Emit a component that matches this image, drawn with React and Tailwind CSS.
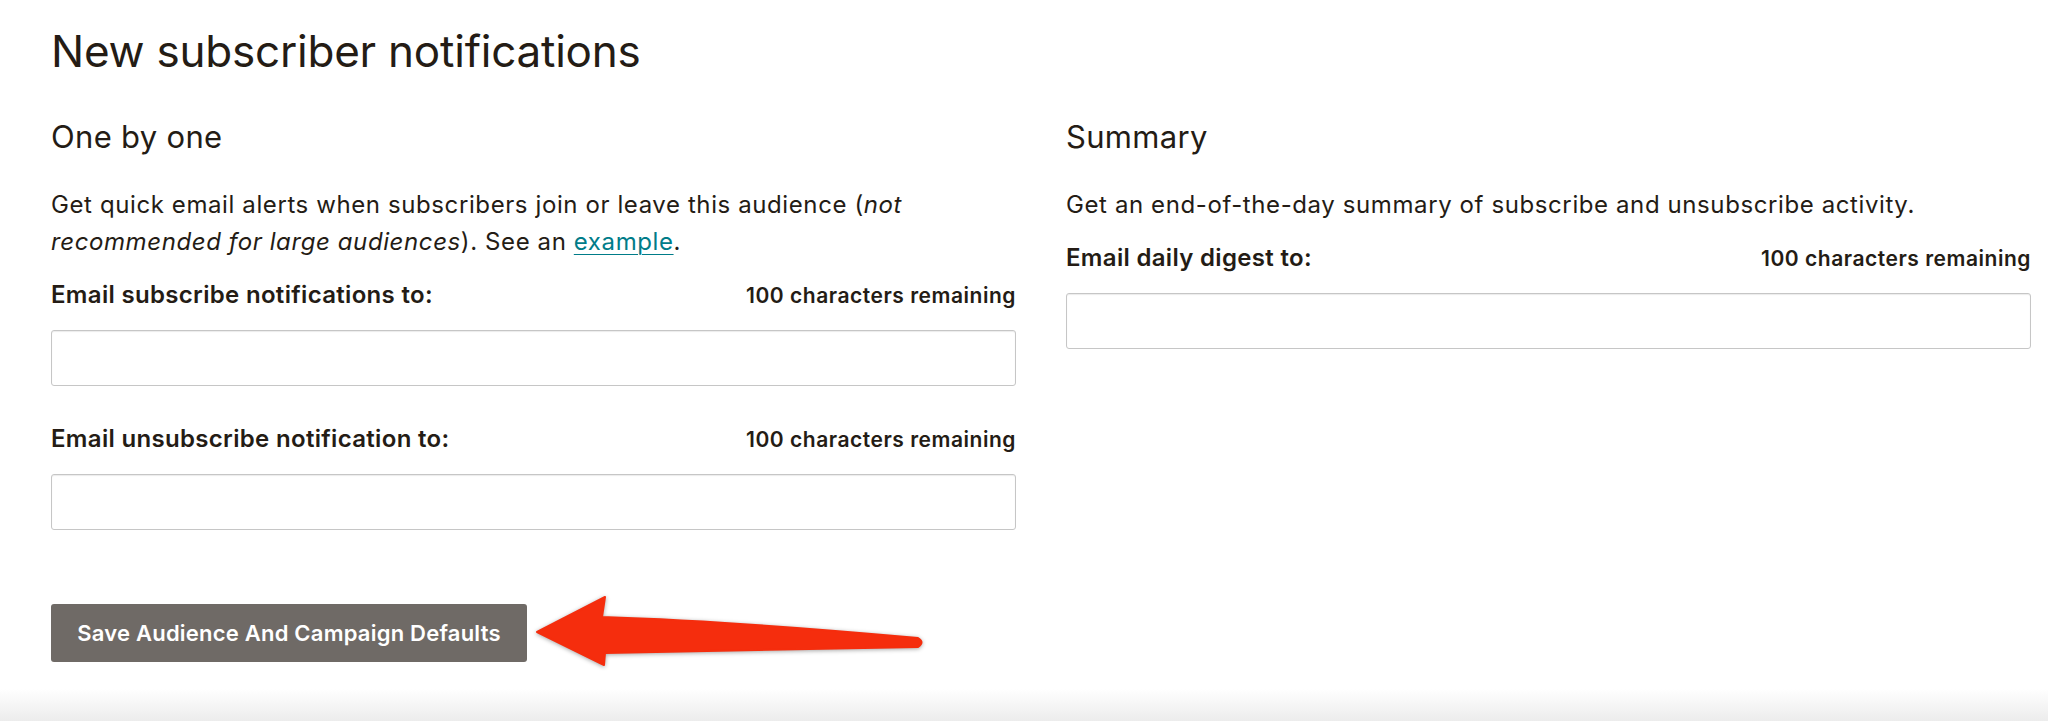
import React from 'react';

const FieldLabel = ({ children, className = 'mt-[20px]' }) => (
  <div className={`flex items-baseline justify-between tracking-[0.02em] ${className}`}>
    <label className="text-[24px] leading-[30px] font-semibold">{children}</label>
    <span className="text-[21px] leading-[30px] font-semibold tracking-[0.025em]">100 characters remaining</span>
  </div>
);

const TextField = () => (
  <input
    type="text"
    className="block w-full h-[56px] mt-[19px] rounded-[3px] border border-[#c6c6c6] bg-white shadow-[inset_0_1px_1px_rgba(0,0,0,0.08)] px-4 text-[24px] outline-none"
  />
);

// hand-drawn callout arrow pointing back at the save button
const CalloutArrow = () => (
  <svg
    className="absolute left-[530px] top-[590px] drop-shadow-[0_1px_2px_rgba(0,0,0,0.35)]"
    width="400"
    height="84"
    viewBox="0 0 400 84"
  >
    <path
      d="M7 42 L75 7 L72 27 Q200 31 388 48 Q395 52 388 57 Q200 60 75 63 L74 75 Z"
      fill="#f52d0d"
      stroke="#f52d0d"
      strokeWidth="2"
      strokeLinejoin="round"
    />
  </svg>
);

export default function App() {
  return (
    <div className="relative min-h-[721px] flex flex-col bg-white text-[#241c15] font-['Inter','Liberation_Sans',Arial,sans-serif]">
      <div className="flex-1 pl-[51px] pr-[17px] pt-[25px]">
        <h1 className="text-[44px] leading-[52px] font-normal tracking-[-0.005em]">New subscriber notifications</h1>

        <div className="grid grid-cols-2 gap-x-[50px] mt-[40px]">
          <section>
            <h2 className="text-[31px] leading-[40px] tracking-[0.01em]">One by one</h2>
            <p className="mt-[29px] text-[24px] leading-[37px] tracking-[0.025em]">
              Get quick email alerts when subscribers join or leave this audience (
              <em>not recommended for large audiences</em>). See an{' '}
              <a href="#" className="text-[#007c89] underline underline-offset-4 decoration-1">example</a>.
            </p>
            <FieldLabel>Email subscribe notifications to:</FieldLabel>
            <TextField />
            <FieldLabel className="mt-[38px]">Email unsubscribe notification to:</FieldLabel>
            <TextField />
          </section>

          <section>
            <h2 className="text-[31px] leading-[40px] tracking-[0.01em]">Summary</h2>
            <p className="mt-[29px] text-[24px] leading-[37px] tracking-[0.025em]">
              Get an end-of-the-day summary of subscribe and unsubscribe activity.
            </p>
            <FieldLabel>Email daily digest to:</FieldLabel>
            <TextField />
          </section>
        </div>

        <button className="mt-[74px] h-[58px] w-[476px] rounded-[3px] bg-[#6f6a66] text-white text-[22px] font-semibold tracking-[0.01em]">
          Save Audience And Campaign Defaults
        </button>
      </div>

      <div className="h-[32px] bg-gradient-to-b from-white to-[#ececec]" />

      <CalloutArrow />
    </div>
  );
}
